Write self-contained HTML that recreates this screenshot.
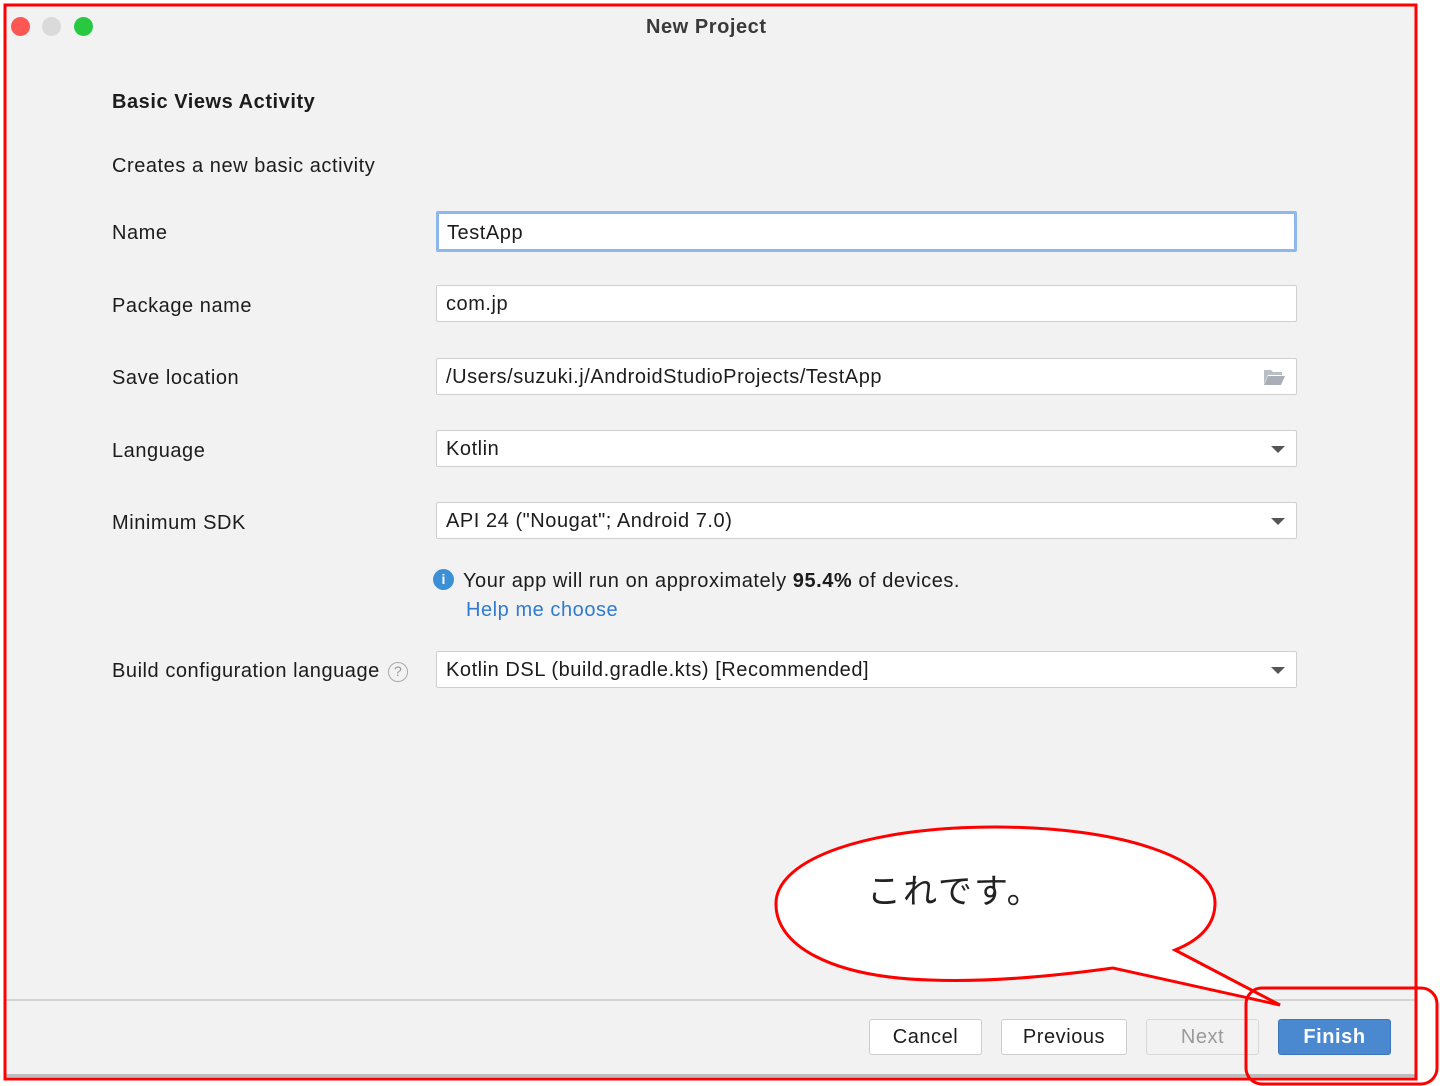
<!DOCTYPE html>
<html><head><meta charset="utf-8">
<style>
*{margin:0;padding:0;box-sizing:border-box}
body{width:1440px;height:1086px;background:#fff;position:relative;overflow:hidden;font-family:"Liberation Sans","Noto Sans CJK JP",sans-serif;color:#1c1c1c;letter-spacing:0.55px}
.win{position:absolute;left:5px;top:5px;width:1411px;height:1072px;background:#f2f2f2;border-bottom:3px solid #bdbdbd}
.a{position:absolute;white-space:nowrap}
.lbl{position:absolute;left:112px;font-size:20px;line-height:22px}
.f{position:absolute;left:436px;width:861px;height:37px;background:#fff;border:1.5px solid #cfcfcf;border-radius:2px;font-size:20px;line-height:36px;padding-left:9px}
.dd:after{content:"";position:absolute;right:11px;top:15px;border-left:7px solid transparent;border-right:7px solid transparent;border-top:7px solid #555}
.btn{position:absolute;top:1019px;height:36px;background:#fff;border:1.5px solid #cdcdcd;border-radius:3px;font-size:20px;line-height:35px;text-align:center}
</style></head><body>
<div class="win"></div>
<div class="a" style="left:11px;top:17px;width:19px;height:19px;border-radius:50%;background:#fc5753"></div>
<div class="a" style="left:42px;top:17px;width:19px;height:19px;border-radius:50%;background:#dadada"></div>
<div class="a" style="left:74px;top:17px;width:19px;height:19px;border-radius:50%;background:#28c840"></div>
<div class="a" style="left:646px;top:16px;font-size:20px;font-weight:bold;color:#3a3a3a">New Project</div>
<div class="lbl" style="top:91px;font-weight:bold">Basic Views Activity</div>
<div class="lbl" style="top:155px">Creates a new basic activity</div>
<div class="lbl" style="top:222px">Name</div>
<div class="lbl" style="top:295px">Package name</div>
<div class="lbl" style="top:367px">Save location</div>
<div class="lbl" style="top:440px">Language</div>
<div class="lbl" style="top:512px">Minimum SDK</div>
<div class="lbl" style="top:660px">Build configuration language <span style="display:inline-block;width:20px;height:20px;border:1.5px solid #aaa;border-radius:50%;color:#999;font-size:14px;line-height:17px;text-align:center;vertical-align:1px;margin-left:2px;letter-spacing:0">?</span></div>
<div class="f" style="top:211px;height:41px;border:3px solid #8cb8ec;line-height:38px;padding-left:8px">TestApp</div>
<div class="f" style="top:285px">com.jp</div>
<div class="f" style="top:358px">/Users/suzuki.j/AndroidStudioProjects/TestApp
<svg style="position:absolute;right:10px;top:9px" width="24" height="18" viewBox="0 0 24 18"><path d="M2 2h7l2 2h9v3H6L2 16z" fill="#b9bec4"/><path d="M6 8h17l-4 9H2z" fill="#a9afb6"/></svg></div>
<div class="f dd" style="top:430px">Kotlin</div>
<div class="f dd" style="top:502px">API 24 ("Nougat"; Android 7.0)</div>
<div class="f dd" style="top:651px">Kotlin DSL (build.gradle.kts) [Recommended]</div>
<div class="a" style="left:433px;top:569px;width:21px;height:21px;border-radius:50%;background:#3d8fd6;color:#fff;font-weight:bold;font-size:14px;line-height:21px;text-align:center;letter-spacing:0">i</div>
<div class="a" style="left:463px;top:570px;font-size:20px">Your app will run on approximately <b>95.4%</b> of devices.</div>
<div class="a" style="left:466px;top:599px;font-size:20px;color:#2f7bd0">Help me choose</div>
<div class="a" style="left:5px;top:999px;width:1411px;height:2px;background:#d4d4d4"></div>
<div class="btn" style="left:869px;width:113px">Cancel</div>
<div class="btn" style="left:1001px;width:126px">Previous</div>
<div class="btn" style="left:1146px;width:113px;background:#f2f2f2;color:#9a9a9a;border-color:#d8d8d8">Next</div>
<div class="btn" style="left:1278px;width:113px;background:#4a88d0;border-color:#3b76bd;color:#fff;font-weight:bold">Finish</div>
<svg class="a" style="left:0;top:0" width="1440" height="1086">
<rect x="5" y="5" width="1411" height="1074" fill="none" stroke="#f00" stroke-width="3"/>
<path d="M1113 968 C1040 978 980 982 930 980 C830 977 775 945 776 903 C777 858 870 827 995 827 C1120 827 1215 858 1215 903 C1215 925 1200 940 1175 950 L1280 1005 Z" fill="#fff" stroke="#f00" stroke-width="3"/>
<rect x="1246" y="988" width="191" height="96" rx="16" fill="none" stroke="#f00" stroke-width="3"/>
</svg>
<div class="a" style="left:867px;top:864px;font-size:34px;color:#222;letter-spacing:2px">これです。</div>
</body></html>
